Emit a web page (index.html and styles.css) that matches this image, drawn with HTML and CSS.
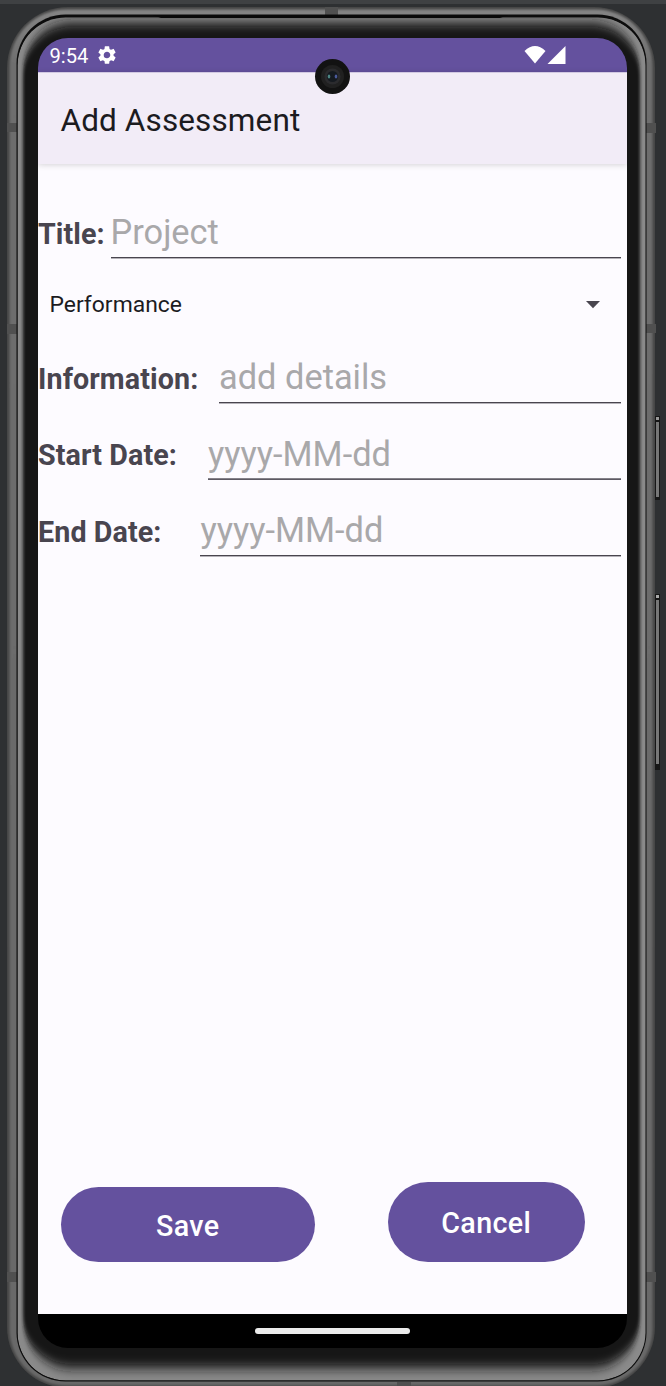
FILE: index.html
```html
<!DOCTYPE html>
<html lang="en">
<head>
<meta charset="utf-8">
<title>Add Assessment</title>
<link rel="stylesheet" href="styles.css">
</head>
<body>
<div class="device">
  <svg class="frame" width="666" height="1386" viewBox="0 0 666 1386" aria-hidden="true">
    <defs>
      <filter id="bezel" x="-5%" y="-5%" width="110%" height="110%"><feGaussianBlur stdDeviation="1.8 6"/></filter>
      <filter id="soft" x="-5%" y="-5%" width="110%" height="110%"><feGaussianBlur stdDeviation="1.1"/></filter>
      <linearGradient id="rim" x1="0" y1="0" x2="0" y2="1"><stop offset="0" stop-color="#858585"/><stop offset=".04" stop-color="#6e6e6e"/><stop offset="1" stop-color="#696969"/></linearGradient>
      <clipPath id="body"><rect x="17.5" y="17.5" width="628.5" height="1363" rx="48"/></clipPath>
    </defs>
    <rect width="666" height="1386" fill="#2e3032"/>
    <rect width="666" height="4" fill="#3f4143"/>
    <rect x="7" y="7" width="648" height="1381" rx="61" fill="#454545"/>
    <rect x="9.5" y="9.5" width="643" height="1376" rx="57" fill="url(#rim)" filter="url(#soft)"/>
    <g fill="#505050">
      <rect x="7" y="123" width="10" height="9"/><rect x="7" y="324" width="10" height="10"/><rect x="7" y="1272" width="10" height="10"/>
      <rect x="646" y="123" width="10" height="10"/><rect x="646" y="324" width="10" height="9"/><rect x="646" y="1272" width="10" height="10"/>
      <rect x="325" y="7" width="13" height="9"/><rect x="397" y="1382" width="14" height="4"/>
    </g>
    <rect x="16.5" y="14.500" width="630" height="1367" rx="49" fill="#0c0c0c"/>
    <g clip-path="url(#body)">
      <rect x="17.5" y="17" width="628" height="1363.500" rx="48" fill="#8a8a8a"/>
      <rect x="23" y="23" width="617" height="1345" rx="50" fill="#141414" filter="url(#bezel)"/>
    </g>
    <path d="M153 15H508L500 18H161Z" fill="#090909"/>
    <g><rect x="655" y="416" width="5" height="84" fill="#161616"/><rect x="656" y="417" width="3" height="3" fill="#999"/><rect x="656" y="422" width="3" height="75" fill="#777"/>
    <rect x="655" y="594" width="5" height="176" fill="#161616"/><rect x="656" y="595" width="3" height="3" fill="#aaa"/><rect x="656" y="600" width="3" height="164" fill="#777"/></g>
  </svg>

  <main class="screen">
    <div class="status">
      <span class="clock">9:54</span>
      <svg class="gear" width="22" height="22" viewBox="0 0 24 24"><path fill="#fff" d="M19.140 12.940c.04-.3.060-.61.060-.94 0-.32-.02-.64-.07-.94l2.030-1.580a.49.49 0 0 0 .12-.61l-1.920-3.320a.488.488 0 0 0-.59-.22l-2.390.96c-.5-.38-1.030-.7-1.620-.94l-.36-2.540a.484.484 0 0 0-.48-.41h-3.840c-.24 0-.43.17-.47.41l-.36 2.540c-.59.24-1.130.57-1.620.94l-2.390-.96c-.22-.08-.47 0-.59.22L2.740 8.870c-.12.21-.08.47.12.61l2.030 1.580c-.05.3-.09.63-.09.94s.02.64.07.94l-2.030 1.580a.49.49 0 0 0-.12.61l1.920 3.320c.12.22.37.29.59.22l2.390-.96c.5.38 1.030.7 1.620.94l.36 2.540c.05.24.24.41.48.41h3.840c.24 0 .44-.17.47-.41l.36-2.540c.59-.24 1.130-.56 1.620-.94l2.390.96c.22.08.47 0 .59-.22l1.920-3.320c.12-.22.070-.47-.12-.61zM12 15.600A3.610 3.610 0 0 1 8.400 12c0-1.980 1.620-3.600 3.600-3.600s3.600 1.620 3.600 3.600-1.620 3.600-3.600 3.600"/></svg>
      <svg class="signals" width="44" height="20" viewBox="0 0 44 20" fill="#fff"><path d="M1.500 6Q12 -4 22.500 6L12 18.500Z"/><path d="M24.500 19L42.500 1V19Z"/></svg>
    </div>
    <header class="appbar"><h1>Add Assessment</h1></header>
    <form class="form">
      <div class="row row-title"><label>Title:</label><div class="field">Project</div></div>
      <div class="spinner"><span>Performance</span><svg width="14" height="8" viewBox="0 0 14 8"><path d="M0 0H14L7 7.200Z" fill="#49454f"/></svg></div>
      <div class="row row-info"><label>Information:</label><div class="field">add details</div></div>
      <div class="row row-start"><label>Start Date:</label><div class="field">yyyy-MM-dd</div></div>
      <div class="row row-end"><label>End Date:</label><div class="field">yyyy-MM-dd</div></div>
      <div class="actions"><button type="button" class="save">Save</button><button type="button" class="cancel">Cancel</button></div>
    </form>
    <nav class="navbar"><div class="handle"></div></nav>
  </main>
  <svg class="camera" width="36" height="36" viewBox="0 0 36 36" aria-hidden="true"><circle cx="18.500" cy="18.500" r="17.500" fill="#121212"/><circle cx="18.500" cy="18.500" r="11.500" fill="#202020"/><circle cx="18.500" cy="18.500" r="8" fill="#2b2b2e"/><circle cx="18.500" cy="18.500" r="5.500" fill="#151a20"/><ellipse cx="15" cy="18.500" rx="1.300" ry="2" fill="#4c8582"/><ellipse cx="22" cy="18.500" rx="1.300" ry="2" fill="#4a5a9a"/></svg>
</div>
</body>
</html>
```
FILE: styles.css
```css
* { box-sizing: border-box; }
body { margin: 0; background: #2e3032; font-family: Roboto, sans-serif; }
.device { position: relative; width: 666px; height: 1386px; padding: 38px 39px 38px 38px; overflow: hidden; }
.frame { position: absolute; left: 0; top: 0; }
.camera { position: absolute; left: 314px; top: 58px; }
.screen { position: relative; width: 589px; height: 1310px; border-radius: 30px; overflow: hidden; display: flex; flex-direction: column; }
.status { height: 34px; background: #64519e; display: flex; align-items: center; padding: 0 60px 0 11.500px; color: #fff; }
.clock { font-size: 20.200px; line-height: 34px; padding-top: 2px; }
.gear { margin-left: 7.500px; }
.signals { margin-left: auto; }
.appbar { position: relative; height: 92px; background: #f2ecf7; padding-left: 22.500px; display: flex; align-items: center; box-shadow: 0 1px 6px rgba(0,0,0,.16); border-top: 1px solid #d2c9e2; }
h1 { margin: 0; font-size: 31.5px; letter-spacing: .12px; font-weight: 400; color: #1c1b1f; line-height: 38px; padding-top: 4px; }
.form { flex: 1; display: flex; flex-direction: column; padding-top: 34px; background: #fdfbff; }
.row { display: grid; height: 60px; margin-bottom: 16.500px; padding-right: 6px; align-items: end; }
.row-title { grid-template-columns: 72.500px 1fr; margin-bottom: 27px; }
.row-info { grid-template-columns: 181px 1fr; margin-bottom: 16px; }
.row-start { grid-template-columns: 170px 1fr; margin-bottom: 17px; }
.row-end { grid-template-columns: 162.400px 1fr; }
label { font-size: 28.660px; line-height: 34px; font-weight: 700; letter-spacing: .1px; color: #49454f; padding-bottom: 7px; white-space: nowrap; }
.field { font-size: 34.400px; line-height: 40px; color: #a9a8aa; border-bottom: 1px solid #49454f; box-shadow: 0 1px 0 rgba(73,69,79,.4); padding-bottom: 5px; white-space: nowrap; }
.row-start .field { padding-bottom: 4px; border-color: #85828a; box-shadow: 0 1px 0 #5d5963; }
.spinner { height: 38px; margin-bottom: 20px; padding: 1px 27px 0 11.500px; display: flex; align-items: center; justify-content: space-between; font-size: 22.900px; color: #1c1b1f; }
.actions { margin-top: auto; padding: 0 42px 52px 23px; display: flex; justify-content: space-between; align-items: end; }
button { border: 0; border-radius: 41px; background: #64519e; color: #fff; font: 500 28.660px Roboto, sans-serif; letter-spacing: .4px; padding: 2px 0 0; }
.save { width: 253.500px; height: 75px; }
.cancel { width: 197.500px; height: 80.500px; }
.navbar { height: 34px; background: #000; display: flex; justify-content: center; align-items: center; }
.handle { width: 155px; height: 6px; border-radius: 3px; background: #ebebeb; }
```
